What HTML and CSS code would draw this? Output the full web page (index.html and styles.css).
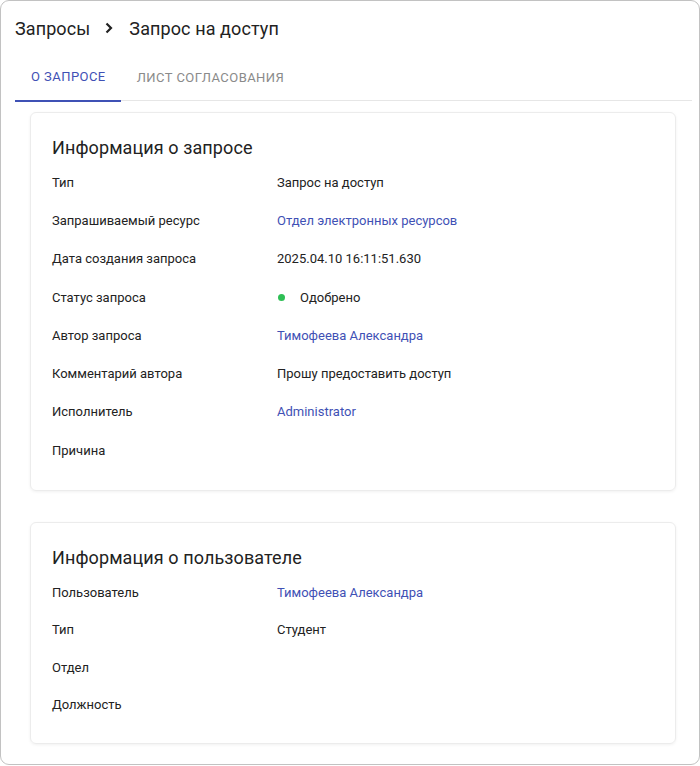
FILE: index.html
```
<!DOCTYPE html>
<html lang="ru">
<head>
    <meta charset="UTF-8">
    <meta name="viewport" content="width=device-width, initial-scale=1.0">
    <title>Запрос на доступ</title>
    <link rel="stylesheet" href="styles.css">
</head>
<body>
    <div class="frame">
        <div class="breadcrumbs">
            <span>Запросы</span>
            <svg class="chevron" width="10" height="12" viewBox="0 0 10 12">
                <path d="M2.5 1.5 L7 6 L2.5 10.5" fill="none" stroke="#222" stroke-width="2.2"/>
            </svg>
            <span>Запрос на доступ</span>
        </div>

        <div class="tabs">
            <div class="tab active">О запросе</div>
            <div class="tab">Лист согласования</div>
        </div>

        <div class="content">
            <div class="card">
                <h2 class="card-title">Информация о запросе</h2>
                <div class="row"><div class="label">Тип</div><div class="value">Запрос на доступ</div></div>
                <div class="row"><div class="label">Запрашиваемый ресурс</div><div class="value link">Отдел электронных ресурсов</div></div>
                <div class="row"><div class="label">Дата создания запроса</div><div class="value">2025.04.10 16:11:51.630</div></div>
                <div class="row"><div class="label">Статус запроса</div><div class="value status"><span class="dot"></span>Одобрено</div></div>
                <div class="row"><div class="label">Автор запроса</div><div class="value link">Тимофеева Александра</div></div>
                <div class="row"><div class="label">Комментарий автора</div><div class="value">Прошу предоставить доступ</div></div>
                <div class="row"><div class="label">Исполнитель</div><div class="value link">Administrator</div></div>
                <div class="row"><div class="label">Причина</div><div class="value"></div></div>
            </div>

            <div class="card card-user">
                <h2 class="card-title">Информация о пользователе</h2>
                <div class="row"><div class="label">Пользователь</div><div class="value link">Тимофеева Александра</div></div>
                <div class="row"><div class="label">Тип</div><div class="value">Студент</div></div>
                <div class="row"><div class="label">Отдел</div><div class="value"></div></div>
                <div class="row"><div class="label">Должность</div><div class="value"></div></div>
            </div>
        </div>
    </div>
</body>
</html>
```

FILE: styles.css
```
* {
  box-sizing: border-box;
}

body {
  margin: 0;
  background: #fff;
  font-family: Roboto, "Noto Sans", sans-serif;
  color: #222;
}

.frame {
  height: 765px;
  border: 1.5px solid #c2c2c2;
  border-radius: 9px;
  padding: 0 7px 0 14px;
}

.breadcrumbs {
  display: flex;
  align-items: center;
  height: 52px;
  padding-top: 2px;
  font-size: 18px;
  letter-spacing: 0.1px;
  color: #222;
}

.chevron {
  margin: 0 15px 0 14px;
}

.tabs {
  display: flex;
  height: 48px;
  border-bottom: 1.5px solid #e6e6e6;
}

.tab {
  display: flex;
  align-items: center;
  padding: 0 15px 0 16px;
  font-size: 13px;
  letter-spacing: 0.45px;
  text-transform: uppercase;
  color: #8a8a8a;
  margin-bottom: -1.5px;
}

.tab.active {
  color: #3f51b5;
  border-bottom: 2.5px solid #3f51b5;
}

.content {
  padding: 11px 16px 0 15px;
}

.card {
  border: 1px solid #ececec;
  border-radius: 6px;
  box-shadow: 0 1px 3px rgba(0, 0, 0, 0.06);
  padding: 23px 21px 21px 21px;
  margin-bottom: 31px;
}

.card-user .row {
  height: 37.5px;
}

.card-user {
  padding-bottom: 20px;
}

.card-title {
  margin: 0 0 3px;
  font-size: 18px;
  font-weight: 400;
  line-height: 24px;
  letter-spacing: 0.1px;
  color: #222;
}

.row {
  display: flex;
  align-items: center;
  height: 38.3px;
  font-size: 13px;
}

.label {
  width: 225px;
  flex-shrink: 0;
}

.value.link {
  color: #3f51b5;
}

.status {
  display: flex;
  align-items: center;
}

.dot {
  width: 7px;
  height: 7px;
  border-radius: 50%;
  background: #2ebf55;
  margin: 0 15px 0 1px;
}
```
